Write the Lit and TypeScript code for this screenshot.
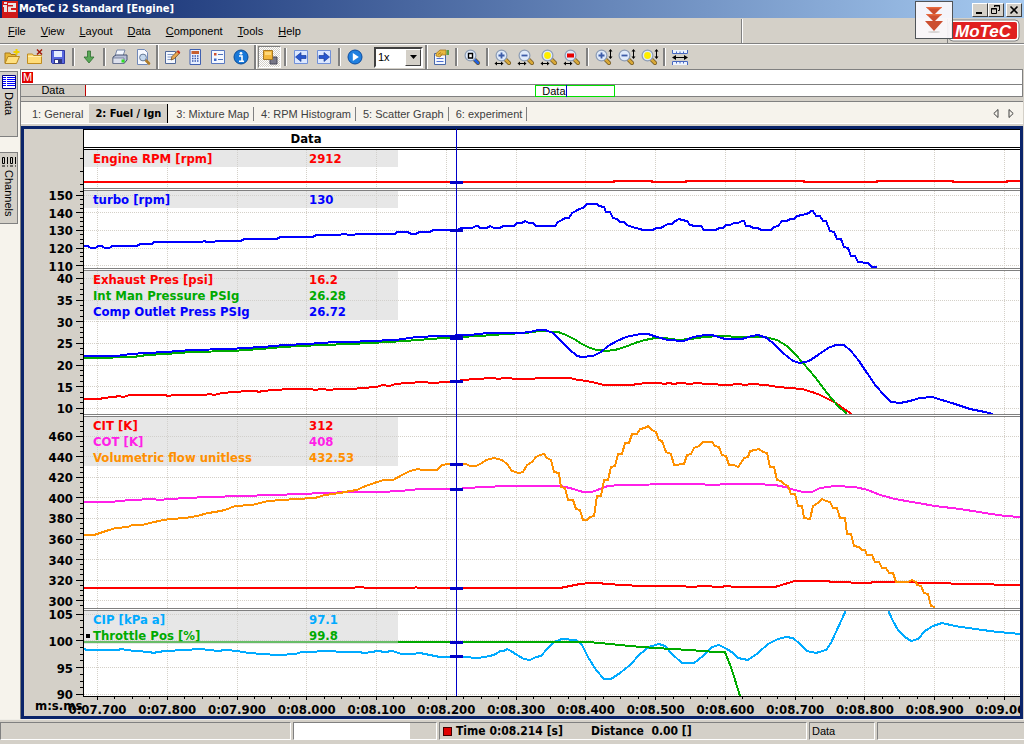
import { LitElement, html, svg, css, nothing } from "lit";
import { customElement, property, state } from "lit/decorators.js";
import { classMap } from "lit/directives/class-map.js";

/* ---------- trace data: x/y pairs inside each panel's view box ---------- */

interface Trace {
  name: string;
  value: string;
  color: string;
  points: string[];
  mark: number;
  active?: boolean;
}
interface Panel {
  top: number;
  height: number;
  max: number;
  min: number;
  major: number;
  minor: number;
  labels: boolean;
  traces: Trace[];
}

const X0 = 84;
const SPAN = 936;
const CURSOR = 456.5;
const RED = "#ff0000";
const BLUE = "#0000ff";
const GREEN = "#00aa00";
const MAGENTA = "#ff20e8";
const ORANGE = "#ff9000";
const CYAN = "#00aaff";

const PANELS: Panel[] = [
  {
    top: 150, height: 38, max: 3870, min: 2701, major: 0, minor: 400, labels: false,
    traces: [
      { name: "Engine RPM [rpm]", value: "2912", color: RED, mark: 182,
        points: ["84,182 614,182 614,181 652,181 652,182 686,182 686,181 804,181 804,182 877,182 877,181 953,181 953,182 1007,182 1007,181 1020,181"] },
    ],
  },
  {
    top: 191, height: 77, max: 152.5, min: 108.6, major: 10, minor: 2.5, labels: true,
    traces: [
      { name: "turbo [rpm]", value: "130", color: BLUE, mark: 230,
        points: ["84,246 88,246 90,247.5 96,247.5 98,246 102,246 104,247.5 110,247.5 112,246 137,246 140,244 152,244 154,242 202,242 204,241 207,242 214,242 216,241 241,241 244,239 277,239 280,237 313,237 316,235 340,235 342,234 346,234 348,235 354,235 356,234 395,234 397,232 408,232 411,234 416,234 419,232 430,232 433,230 458,230 461,228 472,228 476,226 478,226 480,228 487,228 490,226 494,228 500,228 503,226 514,226 517,223 522,223 525,221 529,223 533,223 536,226 555,226 558,222 562,220 565,218 569,218 572,213 576,211 579,209 583,208 587,204 597,204 599,206 604,207 606,212 610,212 613,218 617,219 620,222 624,222 627,225 632,227 636,228 640,229 643,230 653,230 656,228 661,228 664,226 668,224 672,224 674,222 677,220 679,219 682,220 687,221 690,225 695,226 701,226 704,230 716,230 719,228 723,228 726,225 730,225 734,223 738,223 742,221 744,221 746,226 750,226 753,228 758,228 761,230 771,230 774,227 778,226 782,221 787,221 790,219 794,219 797,216 802,215 806,214 809,213 811,211 813,211 816,216 820,216 823,221 826,221 830,231 834,232 837,239 841,239 844,247 848,248 851,256 855,256 858,262 868,263 872,267 877,267"] },
    ],
  },
  {
    top: 271, height: 143, max: 41.7, min: 8.7, major: 5, minor: 1.25, labels: true,
    traces: [
      { name: "Exhaust Pres [psi]", value: "16.2", color: RED, mark: 381,
        points: ["84,399 100,399 103,398 114,397 119,396 123,397 130,395 165,395 168,396 174,395 204,395 210,394 214,395 222,393 234,392 249,391 256,391 259,392 262,391 275,390 290,389 312,389 314,390 322,389 330,390 336,389 345,389 352,389 362,388 377,387 382,385 390,386 395,384 408,383 422,382 433,383 445,382 450,382 463,380 475,379 493,378 499,379 503,378 510,378 514,379 533,379 537,378 570,378 578,380 587,381 596,383 604,385 633,385 636,384 649,383 660,383 664,384 669,383 674,384 679,383 692,384 694,383 710,384 726,385 740,384 744,385 752,384 766,385 778,387 790,388 802,389 812,392 820,395 828,399 836,403 844,409 852,414"] },
      { name: "Int Man Pressure PSIg", value: "26.28", color: GREEN, mark: 338,
        points: ["84,358 109,358 117,357 133,357 147,355 165,354 192,352 232,351 260,349 283,347 300,346 323,345 350,344 370,343 405,341 430,339 458,337 480,336 505,334 525,333 540,331 558,332 566,335 574,339 582,344 590,348 597,350 606,351 615,350 625,347 635,343 645,340 655,338 665,338 678,340 690,339 705,337 720,336 727,336 735,337 765,337 777,340 787,346 795,354 803,363 815,377 827,393 838,406 847,414"] },
      { name: "Comp Outlet Press PSIg", value: "26.72", color: BLUE, mark: 336,
        points: ["84,356 117,356 130,354 147,353 165,352 180,351 190,350 230,349 245,348 262,347 285,345 307,344 322,343 335,342 350,342 370,341 395,340 417,337 440,336 470,335 488,333 520,333 530,332 538,330 545,330 553,333 561,341 569,349 577,356 582,357 593,356 601,352 608,346 617,341 626,337 640,334 648,334 657,337 668,340 684,341 693,337 705,335 712,335 725,339 742,339 752,336 758,335 767,338 775,345 783,353 793,361 800,363 809,361 818,355 828,348 836,345 844,345 851,351 859,361 867,373 876,386 884,395 891,402 900,403 910,401 920,398 932,397 942,400 955,404 970,409 985,412 993,414"] },
    ],
  },
  {
    top: 417, height: 191, max: 479, min: 292.7, major: 20, minor: 5, labels: true,
    traces: [
      { name: "CIT [K]", value: "312", color: RED, mark: 588,
        points: ["84,588 354,588 356,587 363,587 365,588 414,588 416,587 418,588 560,588 570,586 580,584 590,583 600,583 605,584 625,585 638,586 680,586 692,587 703,586 720,587 727,586 735,587 775,587 785,584 795,581 826,581 833,582 868,583 875,582 910,582 920,583 942,583 960,584 988,584 1000,585 1020,585"] },
      { name: "COT [K]", value: "408", color: MAGENTA, mark: 489,
        points: ["84,502 110,502 130,500 155,499 157,500 185,498 210,497 240,496 275,495 300,494 350,492 380,492 400,491 420,489 455,489 470,488 480,487 510,486 560,486 570,488 583,492 592,492 600,489 608,486 620,485 680,484 700,484 710,485 730,484 755,484 775,485 785,487 795,490 803,492 812,492 820,488 835,486 855,487 868,490 880,495 895,499 912,502 935,506 960,509 985,513 1005,516 1020,517"] },
      { name: "Volumetric flow unitless", value: "432.53", color: ORANGE, mark: 464,
        points: ["84,535 94,535 100,533 106,531 116,528 128,527 132,525 142,525 150,523 163,520 172,519 185,518 197,516 208,513 215,512 225,510 235,506 252,505 260,503 268,501 283,500 295,499 315,498 325,495 340,493 350,491 357,490 363,487 377,482 384,480 393,480 402,475 410,471 418,469 422,470 437,470 442,465 448,464 466,464 470,466 476,466 482,463 486,460 494,458 502,460 507,464 512,471 519,473 523,472 527,465 532,462 536,457 540,455 544,454 547,458 551,460 554,472 559,473 561,487 565,488 568,500 573,500 576,509 580,510 583,520 587,520 590,517 594,516 597,496 601,496 604,480 608,480 611,467 615,466 618,454 622,454 625,443 629,443 632,434 637,434 640,429 645,428 648,426 652,430 656,432 659,440 662,441 666,452 671,454 674,465 684,464 687,455 691,454 694,448 699,446 703,442 712,442 715,446 719,447 722,455 726,456 729,465 734,465 738,467 741,463 744,458 748,457 750,451 755,450 759,449 763,452 767,453 770,467 774,467 777,480 781,481 784,484 788,486 791,494 795,494 798,506 802,506 804,518 810,519 813,506 818,503 822,499 826,501 830,502 833,508 837,508 840,518 845,518 847,534 851,534 854,546 859,547 862,550 865,550 867,555 872,555 875,562 879,562 882,568 886,568 889,573 893,573 896,582 908,582 912,580 916,582 917,585 921,586 924,593 928,594 931,606 935,607"] },
    ],
  },
  {
    top: 611, height: 85, max: 105.6, min: 89.7, major: 5, minor: 1.25, labels: true,
    traces: [
      { name: "CIP [kPa a]", value: "97.1", color: CYAN, mark: 656,
        points: [
          "84,649 87,650 118,650 121,649 127,650 135,651 150,652 153,653 158,652 165,651 185,650 200,649 218,651 225,650 238,651 242,652 250,653 262,654 277,655 280,655 295,654 302,652 312,652 322,651 350,652 358,652 365,653 371,652 378,651 385,652 392,651 402,654 412,654 420,653 430,655 440,657 452,657 458,656 463,657 478,658 490,656 496,654 500,651 504,651 507,649 511,651 517,655 524,659 530,660 536,657 541,656 547,649 554,642 562,639 576,640 582,645 588,657 596,670 604,679 611,679 620,673 630,665 640,654 649,647 659,644 665,646 672,654 682,663 694,663 703,656 712,647 719,645 727,649 733,653 738,658 748,660 758,653 768,644 778,639 786,637 793,638 800,644 807,651 816,653 826,650 831,643 836,632 842,619 846,610",
          "888,610 893,621 898,630 905,637 911,641 918,639 925,631 933,626 942,623 955,626 975,629 998,632 1010,633 1020,634",
        ] },
      { name: "Throttle Pos [%]", value: "99.8", color: GREEN, mark: 642, active: true,
        points: ["84,642 588,642 600,643 630,646 655,648 690,650 715,652 725,652 732,670 740,696"] },
    ],
  },
];

/* time axis: one grid line every 100 ms */
const pctX = (ms: number) => ((ms - 7680.7) / 1341.5) * 100;
const TIMES = Array.from({ length: 14 }, (_, i) => 7700 + i * 100);
const formatTime = (ms: number) =>
  `0:${String(Math.floor(ms / 1000)).padStart(2, "0")}.${String(ms % 1000).padStart(3, "0")}`;

const steps = (min: number, max: number, step: number) => {
  const out: number[] = [];
  if (!step) return out;
  for (let v = Math.ceil(min / step) * step; v <= max; v += step) out.push(v);
  return out;
};

/* ---------- toolbar icons, 16 x 16 ---------- */

const lens = (inner: unknown, handle = "#d8a838") => svg`
  <path d="M10 10l4 4" stroke="#6b5220" stroke-width="4" stroke-linecap="round"/>
  <path d="M10 10l4 4" stroke=${handle} stroke-width="2.6" stroke-linecap="round"/>
  <circle cx="6.5" cy="6.5" r="5.4" fill="#dfeafa" stroke="#8c9cb4" stroke-width="1.2"/>
  ${inner}`;
const plus = svg`<path d="M3.5 6.5h6M6.5 3.5v6" stroke="#3c5ca8" stroke-width="1.8"/>`;
const minus = svg`<path d="M3.5 6.5h6" stroke="#3c5ca8" stroke-width="1.8"/>`;
const sun = svg`<circle cx="6.5" cy="6.5" r="3.4" fill="#ffee00"/>`;
const horiz = svg`<path d="M1 14.5h7" stroke="#000"/><path d="M-.5 14.5l2.500-2v4zM8.500 14.500l-2.500-2v4z" fill="#000"/>`;
const vert = svg`<path d="M15.500 2v6" stroke="#000"/><path d="M15.500 0l-2 2.600h4zM15.500 10l-2-2.600h4z" fill="#000"/>`;

const ICONS: Record<string, unknown> = {
  open: svg`<path d="M1 14V4h5l1 1.500h5V8" fill="#e8b838" stroke="#a87818"/><path d="M1 14.500L4 7.500h11.500L12.500 14.500z" fill="#ffe080" stroke="#b88820"/><path d="M12.500 0v6M9.500 3h6" stroke="#f0d000" stroke-width="2"/>`,
  close: svg`<path d="M.5 14.500V5h5l1 1.500h8v8z" fill="#ffdc78" stroke="#c08c20"/><path d="M1 7.500h13.500" stroke="#fff0b0"/><path d="M10 .5l5 5M15 .5l-5 5" stroke="#a01808" stroke-width="1.500"/>`,
  save: svg`<path d="M1.500 1.500h13v13h-12l-1-1z" fill="#5868e0" stroke="#3038a0"/><path d="M4 2h8v6H4z" fill="#e4ecff"/><path d="M4 10h8v4.500H4z" fill="#303880"/><path d="M5 11h3v3H5z" fill="#fff"/>`,
  down: svg`<path d="M6.500 2h3v6H13l-5 6-5-6h3.500z" fill="#5aa858" stroke="#2f7030" stroke-width=".8"/>`,
  print: svg`<path d="M5 1h8l-2 6H3z" fill="#f4f8ff" stroke="#7888a8"/><path d="M1 8l3-2h11v5l-3 3.500H1z" fill="#b8c0d8" stroke="#485470"/><path d="M1 9h11v5.500H1z" fill="#dce0ec" stroke="#606c88" stroke-width=".7"/><path d="M9.500 10.500h3v3h-3z" fill="#30e020"/>`,
  preview: svg`<path d="M2.500 .5h7l3 3v12h-10z" fill="#f6f9ff" stroke="#7088b8"/><path d="M10 10.500l4 4" stroke="#b07c28" stroke-width="2.600" stroke-linecap="round"/><circle cx="8" cy="8.500" r="3.400" fill="#c4d8ee" stroke="#687c98"/>`,
  edit: svg`<path d="M1.500 2.500h10v12h-10z" fill="#f4f8ff" stroke="#506898"/><path d="M3.500 5.500h6M3.500 8h5M3.500 10.500h4" stroke="#8098c8"/><path d="M7 11l1-3.500L13.500 2l2.200 2-5.500 5.800z" fill="#e8a850" stroke="#704818" stroke-width=".8"/><path d="M13.500 2l2.200 2" stroke="#d02818" stroke-width="2"/>`,
  calc: svg`<path d="M3 .5h10.500v15H3z" fill="#e8f0ff" stroke="#4060b0"/><path d="M4.500 2h7.500v3H4.500z" fill="#c86030"/><path d="M5 7h1.500M7.500 7h1.500M10 7h1.500M5 9.500h1.500M7.500 9.500h1.500M10 9.500h1.500M5 12h1.500M7.500 12h1.500M10 12h1.500" stroke="#3858b0" stroke-width="1.500"/>`,
  options: svg`<path d="M1.500 1.500h13v13h-13z" fill="#f4f8ff" stroke="#5878c0"/><path d="M4 4h2.500v2.500H4z" fill="#d05030"/><path d="M4 9.500h2.500V12H4z" fill="#4068c8"/><path d="M8 5.500h5M8 10.500h5" stroke="#5070b8"/>`,
  info: svg`<circle cx="8" cy="8" r="7" fill="#1878d8" stroke="#0a4c98"/><circle cx="8" cy="4.300" r="1.400" fill="#fff"/><path d="M6 7h3v5M6 12.300h5" stroke="#fff" stroke-width="1.600" fill="none"/>`,
  layers: svg`<path d="M8 8h7v7H8z" fill="#787888" stroke="#484858"/><path d="M1.500 1.500h9v9h-9z" fill="#f4b83c" stroke="#a87820"/><path d="M3 3h6v3H3z" fill="#ffd878"/>`,
  prev: svg`<path d="M1.500 1.500h13v13h-13z" fill="#dce8ff" stroke="#7090d8"/><path d="M2.500 8L8 3.500v3h5v3H8v3z" fill="#2858d0" stroke="#183c98" stroke-width=".7"/>`,
  next: svg`<path d="M1.500 1.500h13v13h-13z" fill="#dce8ff" stroke="#7090d8"/><path d="M13.500 8L8 3.500v3H3v3h5v3z" fill="#2858d0" stroke="#183c98" stroke-width=".7"/>`,
  play: svg`<circle cx="8" cy="8" r="7" fill="#2080e0" stroke="#0c4ca0"/><path d="M5.800 4l6 4-6 4z" fill="#fff"/>`,
  props: svg`<path d="M1.500 4.500h11v11h-11z" fill="#f4f8ff" stroke="#4868a8"/><path d="M3.500 9.500h7M3.500 12.500h7" stroke="#5070d0"/><path d="M3 7V4.500L7 1h6v5H9L7 8z" fill="#e8b840" stroke="#986c18" stroke-width=".7"/><path d="M5 5.500l3-2M7 6.500l2.500-2" stroke="#986c18" stroke-width=".7"/><path d="M13.500 1h2.500v5h-2.500z" fill="#58a048"/>`,
  zoomBox: lens(svg`<path d="M4.500 4.500h4v4.500h-4z" fill="#fff" stroke="#000" stroke-width="1.400"/>`, "#2060e0"),
  inX: svg`${lens(plus)}${horiz}`,
  outX: svg`${lens(minus)}${horiz}`,
  fullX: svg`${lens(sun)}${horiz}`,
  selX: svg`${lens(svg`<path d="M3 4.500h7v4H3z" fill="#e80000"/>`)}${horiz}`,
  inY: svg`${lens(plus)}${vert}`,
  outY: svg`${lens(minus)}${vert}`,
  fullY: svg`${lens(sun)}${vert}`,
  ruler: svg`<path d="M0 1h16v4H0zM0 12h16v4H0z" fill="#eef4ff"/><path d="M.5 1v3.500h15V1M4.500 2.500v2M8 2.500v2M11.500 2.500v2M.5 16v-3.500h15V16M4.500 12.500v2M8 12.500v2M11.500 12.500v2" fill="none" stroke="#4868c0"/><path d="M2 8.500h12" stroke="#000"/><path d="M0 8.500l4-2.500v5zM16 8.500l-4-2.500v5z" fill="#000"/>`,
};

type Item = [kind: "btn" | "sep" | "edge" | "speed", icon?: string, label?: string];
const TOOLBAR: Item[] = [
  ["btn", "open", "Open"], ["btn", "close", "Close"], ["btn", "save", "Save"], ["sep"],
  ["btn", "down", "Download"], ["sep"],
  ["btn", "print", "Print"], ["btn", "preview", "Print preview"], ["edge"],
  ["btn", "edit", "Edit"], ["btn", "calc", "Maths"], ["btn", "options", "Options"], ["btn", "info", "Details"], ["edge"],
  ["btn", "layers", "Overlay"], ["sep"],
  ["btn", "prev", "Previous"], ["btn", "next", "Next"], ["sep"],
  ["btn", "play", "Play"], ["speed"], ["edge"],
  ["btn", "props", "Properties"], ["sep"],
  ["btn", "zoomBox", "Zoom window"], ["sep"],
  ["btn", "inX", "Zoom in"], ["btn", "outX", "Zoom out"], ["btn", "fullX", "Zoom full"], ["btn", "selX", "Zoom selection"], ["sep"],
  ["btn", "inY", "Zoom in vertically"], ["btn", "outY", "Zoom out vertically"], ["btn", "fullY", "Zoom full vertically"], ["sep"],
  ["btn", "ruler", "Offset"],
];

/* ---------- shared base ---------- */

const base = css`
  * { box-sizing: border-box; }
  button, select {
    margin: 0; padding: 0; border: 0; border-radius: 0;
    background: none; color: inherit; font: inherit;
  }
  svg { display: block; }
`;

/* ---------- one graph panel: value axis, grid, traces, legend ---------- */

@customElement("graph-panel")
export class GraphPanel extends LitElement {
  @property({ attribute: false }) panel!: Panel;

  static styles = [base, css`
    :host { display: flex; min-height: 0; }
    .axis { flex: none; width: 60px; border-right: 1px solid #000; padding-bottom: 3px; }
    :host([last]) .axis { padding-bottom: 1px; }
    .axis svg { width: 100%; height: 100%; overflow: visible; }
    .axis text { text-anchor: end; font: bold 13px "DejaVu Sans Condensed", "DejaVu Sans", sans-serif; }
    .axis line { stroke: #000; }
    .plot { flex: 1; min-width: 0; position: relative; background: #fff; border-bottom: 3px double #808080; }
    :host([last]) .plot { border-bottom: 1px solid #000; }
    .layer { position: absolute; inset: 0; width: 100%; height: 100%; }
    .crisp { shape-rendering: crispEdges; }
    .grid line { stroke: #d4d0c8; stroke-dasharray: 1 1; }
    .traces polyline { fill: none; stroke-width: 2; vector-effect: non-scaling-stroke; stroke-linejoin: round; }
    .marks line { stroke: #0000c8; stroke-width: 3; }
    .legend {
      position: absolute; left: 0; top: 0; width: 314px; max-width: 100%;
      border-collapse: collapse; table-layout: fixed;
      background: rgba(207, 207, 207, 0.5);
      font: bold 13px/16px "DejaVu Sans Condensed", "DejaVu Sans", sans-serif;
    }
    .legend th, .legend td { padding: 0; text-align: left; white-space: nowrap; height: 16px; }
    .legend th { width: 225px; padding-left: 9px; }
    .legend .active { background: linear-gradient(#000, #000) 2px 6px / 4px 4px no-repeat; }
    .legend tbody tr:first-child > * { padding-top: 1px; }
  `];

  private y(v: number) {
    const { max, min } = this.panel;
    return `${(((max - v) / (max - min)) * 100).toFixed(2)}%`;
  }

  render() {
    const p = this.panel;
    const majors = steps(p.min, p.max, p.major);
    const minors = steps(p.min, p.max, p.minor);
    return html`
      <div class="axis">
        <svg class="crisp" aria-hidden="true">
          ${minors.map((v) => svg`<line x1="56" x2="60" y1=${this.y(v)} y2=${this.y(v)} />`)}
          ${majors.map((v) => svg`<line x1="52" x2="60" y1=${this.y(v)} y2=${this.y(v)} />
            <text x="49" y=${this.y(v)} dy="5">${v}</text>`)}
        </svg>
      </div>
      <div class="plot">
        <svg class="layer grid crisp" aria-hidden="true">
          ${TIMES.map((t) => svg`<line x1="${pctX(t)}%" x2="${pctX(t)}%" y1="0" y2="100%" />`)}
          ${majors.map((v) => svg`<line x1="0" x2="100%" y1=${this.y(v)} y2=${this.y(v)} />`)}
        </svg>
        <svg class="layer traces crisp" viewBox="${X0} ${p.top} ${SPAN} ${p.height}" preserveAspectRatio="none" aria-hidden="true">
          ${p.traces.map((t) => t.points.map((d) => svg`<polyline points=${d} stroke=${t.color} />`))}
          <g class="marks">
            ${p.traces.map((t) => svg`<line x1=${CURSOR - 6.5} x2=${CURSOR + 6.5} y1=${t.mark + 0.5} y2=${t.mark + 0.5} />`)}
          </g>
        </svg>
        <table class="legend">
          <tbody>
            ${p.traces.map((t) => html`
              <tr style="color:${t.color}">
                <th scope="row" class=${t.active ? "active" : ""}>${t.name}</th>
                <td>${t.value}</td>
              </tr>`)}
          </tbody>
        </table>
      </div>`;
  }
}

/* ---------- graph component: title strip, panels, time axis ---------- */

@customElement("time-graph")
export class TimeGraph extends LitElement {
  static styles = [base, css`
    :host {
      display: flex; flex-direction: column; position: relative; overflow: hidden;
      border: 3px solid #0a246a; background: #d4d0c8;
      font: bold 13px/16px "DejaVu Sans Condensed", "DejaVu Sans", sans-serif; color: #000;
    }
    .title { flex: none; height: 21px; margin-left: 59px; border: solid #000; border-width: 1px 0 3px 1px; border-bottom-style: double; background: #fff; }
    .title span { display: block; width: 444px; text-align: center; line-height: 18px; }
    .panels { flex: 1; min-height: 0; display: flex; flex-direction: column; }
    .times { flex: none; height: 19px; display: flex; }
    .unit { flex: none; width: 60px; padding-left: 11px; line-height: 18px; white-space: nowrap; }
    .times svg { flex: 1; min-width: 0; height: 19px; overflow: visible; shape-rendering: crispEdges; }
    .times line { stroke: #000; }
    .times text { text-anchor: middle; }
    .guide { position: absolute; left: 60px; right: 0; top: 0; bottom: 20px; pointer-events: none; }
    .guide i { display: block; height: 100%; border-right: 1px solid #0000c8; }
    .h0 { flex: 38 1 3px; }
    .h1 { flex: 77 1 3px; }
    .h2 { flex: 143 1 3px; }
    .h3 { flex: 191 1 3px; }
    .h4 { flex: 85 1 1px; }
  `];

  render() {
    const minor = Array.from({ length: 53 }, (_, i) => 7700 + i * 25);
    return html`
      <div class="title"><span>Data</span></div>
      <div class="panels">
        ${PANELS.map((p, i) => html`<graph-panel class="h${i}" ?last=${i === PANELS.length - 1} .panel=${p}></graph-panel>`)}
      </div>
      <div class="times">
        <span class="unit">m:s.ms</span>
        <svg>
          ${minor.map((t) => svg`<line x1="${pctX(t)}%" x2="${pctX(t)}%" y1="0" y2=${t % 100 ? 2 : 3} />`)}
          ${TIMES.map((t) => svg`<text x="${pctX(t)}%" y="17">${formatTime(t)}</text>`)}
        </svg>
      </div>
      <div class="guide"><i style="width:${((CURSOR + 0.5 - X0) / SPAN) * 100}%"></i></div>`;
  }
}

/* ---------- application window ---------- */

@customElement("app-root")
export class AppRoot extends LitElement {
  @state() private tab = 1;

  static styles = [base, css`
    :host {
      display: flex; flex-direction: column; height: 100vh; min-height: 480px; overflow: hidden;
      position: relative; background: #d4d0c8; color: #000;
      font: 11px/14px "Liberation Sans", Arial, sans-serif;
    }
    .titlebar {
      flex: none; display: flex; align-items: center; height: 18px; padding: 0 2px;
      background: linear-gradient(90deg, #0a246a, #a6caf0); color: #fff;
    }
    .titlebar h1 { flex: 1; margin: 0; padding-left: 1px; font: bold 11px/18px "DejaVu Sans Condensed", "DejaVu Sans", sans-serif; }
    .win { width: 16px; height: 14px; margin-top: 1px; background: #d4d0c8; border: 1px solid; border-color: #fff #404040 #404040 #fff; }
    .win.shut { margin-left: 2px; }
    .menubar { flex: none; display: flex; align-items: stretch; gap: 1px; height: 26px; padding: 0 76px 0 1px; border-bottom: 1px solid #808080; }
    .menubar button { padding: 0 7px; }
    .menubar .fill { flex: 1; display: flex; justify-content: flex-end; }
    .menubar .pane { width: 207px; margin-top: 1px; border: solid #808080; border-width: 0 1px; box-shadow: inset 1px 0 #fff; }
    .toolbar { flex: none; display: flex; align-items: center; height: 25px; border-top: 1px solid #fff; }
    .tool { flex: none; width: 23px; height: 22px; display: flex; align-items: center; justify-content: center; }
    .tool svg { overflow: visible; }
    .pressed {
      border: 1px solid; border-color: #808080 #fff #fff #808080;
      background: repeating-conic-gradient(#fff 0 25%, #d4d0c8 0 50%) 0 0 / 2px 2px;
    }
    .sep { flex: none; width: 8px; height: 18px; display: flex; justify-content: center; }
    .sep::before { content: ""; width: 2px; background: #808080; border-right: 1px solid #fff; }
    .edge { flex: none; width: 6px; align-self: stretch; display: flex; justify-content: center; }
    .edge::before { content: ""; width: 2px; background: #808080; border-right: 1px solid #fff; }
    .speed {
      flex: none; position: relative; display: flex; width: 49px; height: 21px; margin-left: 8px;
      background: #fff; border: 2px solid; border-color: #404040 #fff #fff #404040;
    }
    .speed select { flex: 1; width: 100%; appearance: none; padding: 0 16px 0 2px; outline: 0; }
    .speed i {
      position: absolute; right: 0; top: 0; bottom: 0; width: 16px; pointer-events: none;
      display: flex; align-items: center; justify-content: center; background: #d4d0c8;
      border: 1px solid; border-color: #fff #404040 #404040 #fff;
    }
    .brand { position: absolute; right: 4px; top: 1px; display: flex; align-items: flex-end; pointer-events: none; }
    .drop { width: 38px; height: 38px; border: 1px solid #505458; background: rgba(252, 248, 252, 0.92); display: flex; justify-content: center; align-items: center; margin-right: -5px; z-index: 1; }
    .logo { margin-bottom: -3px; }
    .logo text { font: italic bold 17px "Liberation Sans", Arial, sans-serif; }

    .body { flex: 1; min-height: 0; display: flex; }
    .rail { flex: none; width: 20px; background: #f6f3ec; display: flex; flex-direction: column; align-items: flex-start; padding-top: 2px; gap: 15px; }
    .rail button {
      width: 18px; padding: 3px 0 7px; display: flex; flex-direction: column; align-items: center; gap: 3px;
      background: #d4d0c8; border: solid; border-width: 1px 1px 1px 0; border-color: #808080;
    }
    .rail .tall { min-height: 66px; }
    .rail .word { writing-mode: vertical-rl; line-height: 14px; }
    .main { flex: 1; min-width: 0; display: flex; flex-direction: column; border-left: 1px solid #808080; padding-right: 1px; }
    .laps { flex: none; border: solid #808080; border-width: 1px 1px 1px 0; background: #fff; }
    .run { height: 15px; padding: 2px 1px; border-bottom: 1px solid #808080; }
    .run b { display: block; width: 11px; height: 11px; background: #e00000; color: #fff; font: 11px/11px "Liberation Sans", Arial, sans-serif; text-align: center; }
    .track { display: flex; height: 11px; line-height: 11px; }
    .track .name { flex: none; width: 65px; background: #d4d0c8; border-right: 1px solid #c00000; text-align: center; }
    .track .space { flex: 1; }
    .track .lap { width: 8.500%; margin-left: 48%; border: 1px solid #00e000; padding-left: 6px; line-height: 10px; }
    .track .lap span { border-right: 1px solid #0000c8; }
    .tabs {
      flex: none; display: flex; align-items: stretch; height: 23px; margin-top: 4px; padding: 2px 5px 0 4px;
      border-top: 1px solid #808080; border-bottom: 1px solid #fff; background: #f6f3ec; color: #404040;
    }
    .tabs .tab { display: flex; align-items: center; padding: 0 0 0 7px; white-space: nowrap; }
    .tabs .tab::after { content: ""; height: 14px; border-right: 1px solid #808080; margin-left: 4px; }
    .tabs .tab:first-child::after { visibility: hidden; }
    .tabs .tab.on {
      padding: 0 6px; margin: 0 1px; background: #d4d0c8; color: #000; border-right: 1px solid #000;
      font: bold 11px "DejaVu Sans Condensed", "DejaVu Sans", sans-serif;
    }
    .tabs .tab.on::after { display: none; }
    .tabs .grow { flex: 1; }
    .tabs .nav { width: 15px; display: flex; align-items: center; justify-content: center; }
    time-graph { flex: 1; min-height: 0; margin-top: 2px; }

    .status { flex: none; display: flex; gap: 2px; height: 25px; padding: 2px 0 4px; border-top: 1px solid #f0eee8; background: #d4d0c8; }
    .cell { display: flex; align-items: center; height: 18px; padding: 0 3px; border: 1px solid; border-color: #808080 #fff #fff #808080; white-space: nowrap; overflow: hidden; }
    .wide { flex: 291 1 291px; }
    .bar { flex: 144 1 144px; padding: 0; align-items: stretch; }
    .bar i { width: 82%; background: #fff; }
    .read { flex: 368 1 368px; font: bold 12px/14px "DejaVu Sans Condensed", "DejaVu Sans", sans-serif; }
    .read i { width: 9px; height: 9px; margin-right: 4px; background: #e00000; border: 1px solid #400000; }
    .read .time { width: 135px; }
    .small { flex: 66 1 66px; padding-left: 2px; }
    .rest { flex: 147 1 147px; border-right: 0; }
  `];

  private menu(label: string) {
    return html`<button><u>${label[0]}</u>${label.slice(1)}</button>`;
  }

  private item([kind, icon, label]: Item) {
    if (kind === "sep") return html`<span class="sep"></span>`;
    if (kind === "edge") return html`<span class="edge"></span>`;
    if (kind === "speed")
      return html`<span class="speed">
        <select aria-label="Playback speed"><option>1x</option><option>2x</option><option>4x</option></select>
        <i><svg width="7" height="4"><path d="M0 0h7L3.500 4z" /></svg></i>
      </span>`;
    return html`<button class=${classMap({ tool: true, pressed: icon === "layers" })} aria-label=${label ?? nothing}>
      <svg width="16" height="16" viewBox="0 0 16 16" fill="none">${ICONS[icon!]}</svg>
    </button>`;
  }

  render() {
    const tabs = ["1: General", "2: Fuel / Ign", "3: Mixture Map", "4: RPM Histogram", "5: Scatter Graph", "6: experiment"];
    return html`
      <header class="titlebar">
        <svg width="16" height="17" viewBox="0 0 16 17" aria-hidden="true">
          <path d="M0 0h16v17H0z" fill="#d01818" />
          <path d="M1 4h4v7H2V6H1zM2 1h3v2H2zM6 2h8v5H9v2h5v2H6V5.500h5V4H6z" fill="#e8e4e4" />
        </svg>
        <h1>MoTeC i2 Standard [Engine]</h1>
        <button class="win" aria-label="Minimize"><svg width="14" height="12"><path d="M3 8h6v2H3z" /></svg></button>
        <button class="win" aria-label="Restore"><svg width="14" height="12" fill="none" stroke="#000"><path d="M5.500 3V1.500h5v5H9M5 2h6M2.500 4.500h5v5h-5zM2 5h6" /></svg></button>
        <button class="win shut" aria-label="Close"><svg width="14" height="12" stroke="#000" stroke-width="1.600"><path d="M3.500 2.500l7 7M10.500 2.500l-7 7" /></svg></button>
      </header>
      <nav class="menubar">
        ${["File", "View", "Layout", "Data", "Component", "Tools", "Help"].map((m) => this.menu(m))}
        <span class="fill"><span class="pane"></span></span>
      </nav>
      <div class="toolbar" role="toolbar">${TOOLBAR.map((t) => this.item(t))}</div>

      <div class="body">
        <aside class="rail">
          <button class="tall">
            <svg width="14" height="14" viewBox="0 0 14 14" aria-hidden="true">
              <path d="M.5 .5h13v13H.5z" fill="#fff" stroke="#000080" />
              <path d="M1 2.500h12M1 4.500h12M1 6.500h12M1 8.500h12M1 10.500h12" stroke="#0000ff" />
              <path d="M4.500 1v12" stroke="#fff" />
            </svg>
            <span class="word">Data</span>
          </button>
          <button>
            <svg width="14" height="11" viewBox="0 0 14 11" fill="none" stroke="#000" aria-hidden="true">
              <path d="M.5 1.500h2v6h-2zM5.500 1v7M8.500 1.500h2v6h-2zM13.500 1v7M0 10h3M5 10h1M8 10h3M13 10h1" />
            </svg>
            <span class="word">Channels</span>
          </button>
        </aside>

        <main class="main">
          <section class="laps">
            <div class="run"><b>M</b></div>
            <div class="track">
              <span class="name">Data</span>
              <div class="space"><div class="lap"><span>Data</span></div></div>
            </div>
          </section>
          <div class="tabs" role="tablist">
            ${tabs.map((t, i) => html`<button role="tab" aria-selected=${i === this.tab}
              class=${classMap({ tab: true, on: i === this.tab })} @click=${() => (this.tab = i)}>${t}</button>`)}
            <span class="grow"></span>
            <button class="nav" aria-label="Previous sheet"><svg width="6" height="9" fill="none" stroke="#404040"><path d="M5 .5v8L.8 4.500z" /></svg></button>
            <button class="nav" aria-label="Next sheet"><svg width="6" height="9" fill="none" stroke="#404040"><path d="M1 .5v8l4.200-4z" /></svg></button>
          </div>
          <time-graph></time-graph>
        </main>
      </div>

      <footer class="status">
        <span class="cell wide"></span>
        <span class="cell bar"><i></i></span>
        <span class="cell read"><i></i><span class="time">Time 0:08.214 [s]</span><span>Distance&nbsp; 0.00 []</span></span>
        <span class="cell small">Data</span>
        <span class="cell rest"></span>
      </footer>

      <div class="brand">
        <span class="drop"><svg width="20" height="26" viewBox="0 0 20 26" aria-hidden="true">
          <path d="M2 0h16l-8 8zM2 7h16l-8 8zM1 14h18l-9 10z" fill="#cc4f30" />
          <path d="M2 0h16l-1 1.500H3.500zM2 7h16l-1 1.500H3.500z" fill="#e86a3c" />
          <ellipse cx="10" cy="25" rx="6" ry="1" fill="#d8d4d4" />
        </svg></span>
        <svg class="logo" width="72" height="23" viewBox="0 0 72 23">
          <rect x="1" y="1" width="70" height="21" rx="4" fill="#fff" stroke="#808080" />
          <rect x="3" y="3" width="66" height="17" rx="2" fill="#e02020" />
          <text x="7" y="18" fill="#fff">MoTeC</text>
        </svg>
      </div>`;
  }
}
